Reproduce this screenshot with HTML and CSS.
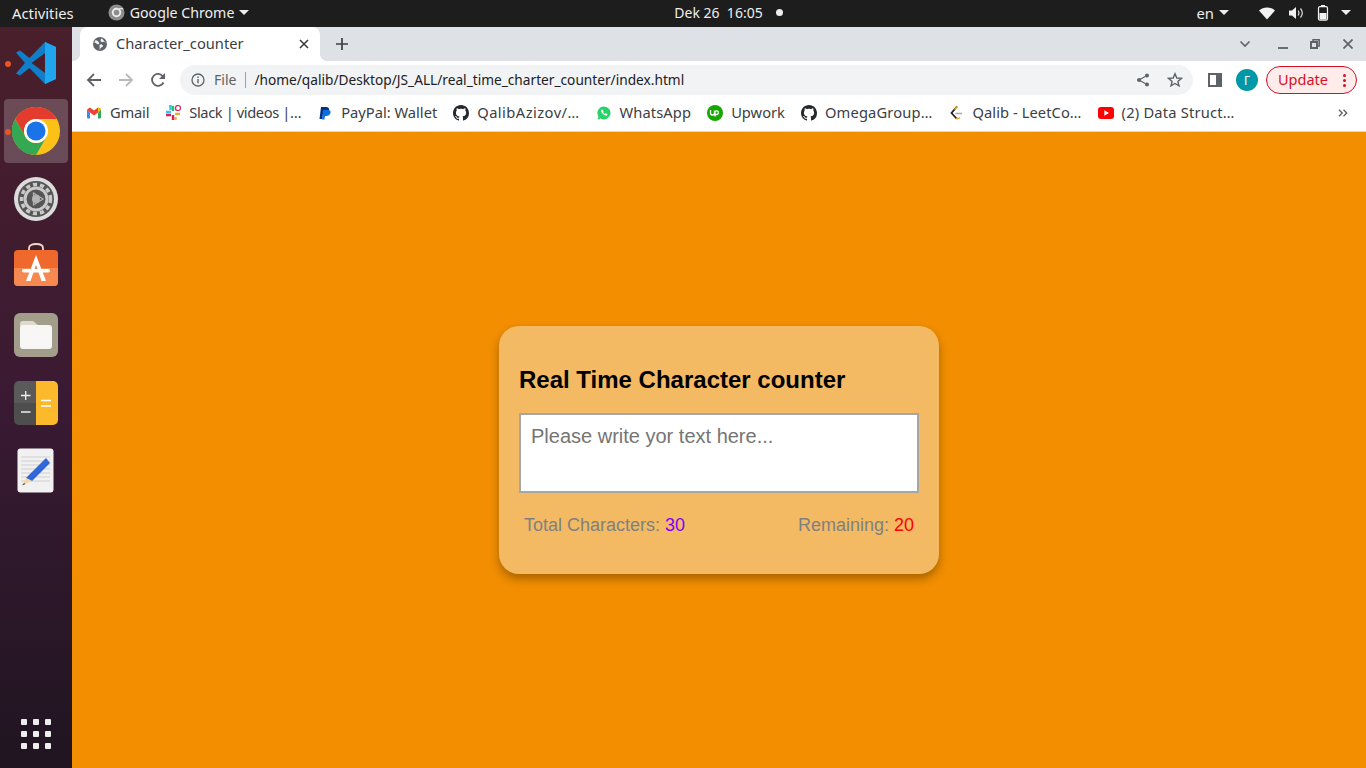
FILE: index.html
```html
<!DOCTYPE html>
<html lang="en">
<head>
    <meta charset="UTF-8">
    <meta name="viewport" content="width=device-width, initial-scale=1.0">
    <title>Character_counter</title>
    <link rel="stylesheet" href="styles.css">
</head>
<body>
    <header class="topbar">
        <div class="topbar-left">
            <span class="activities">Activities</span>
            <span class="app-menu">
                <svg class="app-icon" width="17" height="17" viewBox="0 0 18 18"><circle cx="9" cy="9" r="8.500" fill="#8d8d8d"/><circle cx="9" cy="9" r="4" fill="none" stroke="#eee" stroke-width="2"/><path d="M9 5h7" stroke="#ddd" stroke-width="1.500"/></svg>
                Google Chrome
                <i class="caret"></i>
            </span>
        </div>
        <div class="clock">Dek 26&nbsp;&nbsp;16:05<b class="clock-dot"></b></div>
        <div class="topbar-right">
            <span class="lang">en <i class="caret"></i></span>
            <svg width="18" height="14" viewBox="0 0 18 14"><path d="M1 4.500C5.500.5 12.500.5 17 4.500L9 13.500z" fill="#f2f2f2"/></svg>
            <svg class="sound" width="16" height="14" viewBox="0 0 16 14"><path d="M1 4.500h3L8 1v12L4 9.500H1z" fill="#f2f2f2"/><path d="M10 4.500c1.200 1.500 1.200 3.500 0 5M12.500 2.500c2.200 2.700 2.200 6.300 0 9" fill="none" stroke="#ddd" stroke-width="1.200"/></svg>
            <svg width="12" height="16" viewBox="0 0 12 16"><rect x="1.500" y="1.700" width="9" height="13.500" rx="1.500" fill="none" stroke="#f2f2f2" stroke-width="1.200"/><rect x="4" y="0" width="4" height="2" fill="#f2f2f2"/><rect x="2.500" y="8" width="7" height="6.500" fill="#f2f2f2"/></svg>
            <i class="caret"></i>
        </div>
    </header>

    <div class="desktop">
        <nav class="dock">
            <div class="dock-item">
                <b class="running"></b>
                <svg width="44" height="44" viewBox="0 0 44 44">
                    <path d="M31 1 15.500 17 6 9.500 2 11.500 11 22 2 32.500 6 34.500 15.500 27 31 43 42 38V6z" fill="#0f7fc9"/>
                    <path d="M31 1 42 6V38L31 43z" fill="#20a5ef"/>
                    <path d="M31 12V32L17.500 22z" fill="#4a1f2b"/>
                </svg>
            </div>
            <div class="dock-item active">
                <b class="running"></b>
                <svg width="48" height="48" viewBox="0 0 48 48">
                    <circle cx="24" cy="24" r="24" fill="#fbc116"/>
                    <path d="M3.200 12A24 24 0 0 1 44.800 12H24A12 12 0 0 0 13.600 30z" fill="#e33b2e"/>
                    <path d="M3.200 12A24 24 0 0 0 24 48L34.400 30A12 12 0 0 1 13.600 30z" fill="#34a853"/>
                    <circle cx="24" cy="24" r="12" fill="#fff"/>
                    <circle cx="24" cy="24" r="9.500" fill="#1a73e8"/>
                </svg>
            </div>
            <div class="dock-item">
                <svg width="46" height="46" viewBox="0 0 46 46">
                    <circle cx="23" cy="23" r="22" fill="#dcdcdc"/>
                    <circle cx="23" cy="23" r="18" fill="#565656"/>
                    <circle cx="23" cy="23" r="14.500" fill="none" stroke="#c9c9c9" stroke-width="3.500" stroke-dasharray="4.200 3"/>
                    <circle cx="23" cy="23" r="11" fill="none" stroke="#c9c9c9" stroke-width="3"/>
                    <circle cx="23" cy="23" r="4" fill="#b5b5b5"/>
                    <path d="M20.500 17 30 23 20.500 29z" fill="none" stroke="#b5b5b5" stroke-width="1.200"/>
                </svg>
            </div>
            <div class="dock-item">
                <svg width="44" height="48" viewBox="0 0 44 48">
                    <path d="M15 8V5C15 2.500 18 1 22 1s7 1.500 7 4v3" fill="none" stroke="#eed9c4" stroke-width="1.800"/>
                    <rect x="0" y="7" width="44" height="36" rx="4" fill="#f0692c"/>
                    <path d="M0 25H44V39a4 4 0 0 1-4 4H4a4 4 0 0 1-4-4z" fill="#f5894f"/>
                    <path d="M22 12 32 38H27.500L22 22 16.500 38H12z" fill="#fff"/>
                    <rect x="8" y="26" width="28" height="3.500" rx="1.700" fill="#fff"/>
                </svg>
            </div>
            <div class="dock-item">
                <svg width="44" height="44" viewBox="0 0 44 44">
                    <rect width="44" height="44" rx="6" fill="#a39e8c"/>
                    <path d="M6 11a3 3 0 0 1 3-3h10l6 5H6z" fill="#dedad0"/>
                    <rect x="6" y="12" width="32" height="24" rx="3" fill="#f8f7f5"/>
                </svg>
            </div>
            <div class="dock-item">
                <svg width="44" height="44" viewBox="0 0 44 44">
                    <path d="M22 0H5a5 5 0 0 0-5 5v17h22z" fill="#5a5a5a"/>
                    <path d="M22 22H0v17a5 5 0 0 0 5 5h17z" fill="#4e4e4e"/>
                    <path d="M22 0h17a5 5 0 0 1 5 5v34a5 5 0 0 1-5 5H22z" fill="#fdb92c"/>
                    <path d="M7 14.500h9.500M11.700 10v9M7 31h9.500" stroke="#eee" stroke-width="1.300"/>
                    <path d="M27 19.500h10M27 25h10" stroke="#fff" stroke-width="1.300"/>
                </svg>
            </div>
            <div class="dock-item">
                <svg width="38" height="46" viewBox="0 0 38 46">
                    <rect x="0.500" y="0.500" width="36" height="44" rx="3" fill="#f1f1f1"/>
                    <path d="M4 9h29M4 13h29M4 17h29M4 21h29M4 25h29M4 29h29M4 33h29" stroke="#cfcfcf" stroke-width="1"/>
                    <path d="M29 10 33 15 15 33 9 30z" fill="#2f66d8"/>
                    <path d="M9 30 15 33 5.500 37z" fill="#f0d6a8"/>
                    <path d="M7 35 5 37.500 8.500 36z" fill="#444"/>
                </svg>
            </div>
            <div class="apps-grid">
                <i></i><i></i><i></i><i></i><i></i><i></i><i></i><i></i><i></i>
            </div>
        </nav>

        <div class="browser">
            <div class="tabstrip">
                <div class="tab">
                    <svg width="14" height="14" viewBox="0 0 16 16"><circle cx="8" cy="8" r="8" fill="#5f6368"/><path d="M3 3.500c2 .5 3 1.500 4 3S5 9 4.500 8 2 6 1 7M10 1.500C9 3 8 3.500 9 5s3 0 4 .5 1 1.500 2 1.500M8 15c0-2 1-2.500 2.500-3.500s1-2.500-.5-3-3 .5-2.500 2.500S7 13.500 8 15z" fill="#fff" opacity=".9"/></svg>
                    <span class="tab-title">Character_counter</span>
                    <svg class="tab-close" width="10" height="10" viewBox="0 0 10 10"><path d="M1 1l8 8M9 1l-8 8" stroke="#3c4043" stroke-width="1.600"/></svg>
                </div>
                <svg class="new-tab" width="12" height="12" viewBox="0 0 12 12"><path d="M6 0v12M0 6h12" stroke="#3c4043" stroke-width="1.700"/></svg>
                <div class="window-controls">
                    <svg width="12" height="8" viewBox="0 0 12 8"><path d="M1.500 1.500 6 6l4.500-4.500" fill="none" stroke="#5f6368" stroke-width="1.600"/></svg>
                    <svg class="win-min" width="10" height="10" viewBox="0 0 10 10"><path d="M0 9h10" stroke="#5f6368" stroke-width="1.800"/></svg>
                    <svg class="win-max" width="10" height="10" viewBox="0 0 10 10"><path d="M3 2V.800h6.200V7H8" fill="none" stroke="#5f6368" stroke-width="1.500"/><rect x="1" y="3" width="6" height="6" fill="none" stroke="#5f6368" stroke-width="2"/></svg>
                    <svg class="win-close" width="10" height="10" viewBox="0 0 10 10"><path d="M.500.500l9 9M9.500.500l-9 9" stroke="#5f6368" stroke-width="1.700"/></svg>
                </div>
            </div>

            <div class="toolbar">
                <svg class="nav-btn" width="16" height="16" viewBox="0 0 16 16"><path d="M15 8H2M8 2 2 8l6 6" fill="none" stroke="#5f6368" stroke-width="1.800"/></svg>
                <svg class="nav-btn" width="16" height="16" viewBox="0 0 16 16"><path d="M1 8h13M8 2l6 6-6 6" fill="none" stroke="#b8babd" stroke-width="1.800"/></svg>
                <svg class="nav-btn" width="16" height="16" viewBox="0 0 16 16"><path d="M13.500 10.500A6 6 0 1 1 13 4.500" fill="none" stroke="#5f6368" stroke-width="1.800"/><path d="M15 1v6H9z" fill="#5f6368"/></svg>
                <div class="omnibox">
                    <svg width="14" height="14" viewBox="0 0 14 14"><circle cx="7" cy="7" r="6" fill="none" stroke="#5f6368" stroke-width="1.300"/><path d="M7 6v4.200M7 3.500v1.400" stroke="#5f6368" stroke-width="1.400"/></svg>
                    <span class="scheme">File</span>
                    <span class="omni-sep"></span>
                    <span class="url">/home/qalib/Desktop/JS_ALL/real_time_charter_counter/index.html</span>
                    <svg class="share" width="14" height="14" viewBox="0 0 14 14"><path d="M11 2.500 3 7l8 4.500" fill="none" stroke="#5f6368" stroke-width="1.200"/><circle cx="11" cy="2.500" r="2" fill="#5f6368"/><circle cx="3" cy="7" r="2" fill="#5f6368"/><circle cx="11" cy="11.500" r="2" fill="#5f6368"/></svg>
                    <svg class="star" width="16" height="16" viewBox="0 0 16 16"><path d="M8 1.800 9.800 6l4.600.4-3.500 3 1.100 4.500L8 11.500l-4 2.400 1.100-4.500-3.500-3L6.200 6z" fill="none" stroke="#5f6368" stroke-width="1.400"/></svg>
                </div>
                <svg class="side-panel" width="14" height="14" viewBox="0 0 14 14"><rect x="1" y="1" width="12" height="12" fill="none" stroke="#5f6368" stroke-width="2"/><rect x="8" y="1" width="5" height="12" fill="#5f6368"/></svg>
                <div class="avatar">Γ</div>
                <div class="update">Update<span class="update-dots"><i></i><i></i><i></i></span></div>
            </div>

            <div class="bookmarks">
                <span class="bookmark bm-gmail">
                    <svg width="16" height="16" viewBox="-1 -2.500 16 16"><path d="M0 2v8a1 1 0 0 0 1 1h2V5z" fill="#4285f4"/><path d="M14 2v8a1 1 0 0 1-1 1h-2V5z" fill="#34a853"/><path d="M0 2 3 0l4 3 4-3 3 2-3 3-4 3-4-3z" fill="#ea4335"/><path d="M11 0l3 1v1l-3 3z" fill="#fbbc04"/></svg>
                    Gmail
                </span>
                <span class="bookmark bm-slack">
                    <svg width="16" height="16" viewBox="0 0 16 16"><path d="M1 7h5M4 1h1.500v4" stroke="#36c5f0" stroke-width="2.400" fill="none"/><path d="M8 1v5M10 4h4" stroke="#2eb67d" stroke-width="2.400" fill="none"/><path d="M10 9h5M10.500 12v3" stroke="#ecb22e" stroke-width="2.400" fill="none"/><path d="M8 10v5M1 10h5" stroke="#e01e5a" stroke-width="2.400" fill="none"/><circle cx="13" cy="3" r="2.500" fill="#fff" stroke="#e01e5a" stroke-width="1.200"/></svg>
                    Slack | videos |…
                </span>
                <span class="bookmark bm-paypal">
                    <svg width="16" height="16" viewBox="-1 -1 16 16"><path d="M3 1h5c2.500 0 3.500 1.500 3 3.500S8.500 8 6.500 8H5l-1 5H1.500z" fill="#003087"/><path d="M5 4h5c2 0 3 1.200 2.500 3S10 10 8.500 10H7l-.7 3.500H4z" fill="#0a6fd8"/></svg>
                    PayPal: Wallet
                </span>
                <span class="bookmark bm-qalib">
                    <svg width="16" height="16" viewBox="0 0 16 16"><path d="M8 0C3.580 0 0 3.580 0 8c0 3.540 2.290 6.530 5.470 7.590.4.070.55-.17.55-.38 0-.19-.01-.82-.01-1.490-2.010.37-2.530-.49-2.690-.94-.09-.23-.48-.94-.82-1.130-.28-.15-.68-.52-.01-.53.63-.01 1.080.58 1.230.82.720 1.210 1.870.87 2.330.66.070-.52.280-.87.510-1.070-1.780-.2-3.640-.89-3.640-3.950 0-.87.310-1.590.820-2.150-.08-.2-.36-1.020.08-2.120 0 0 .67-.21 2.200.82.640-.18 1.320-.27 2-.27s1.360.09 2 .27c1.530-1.040 2.200-.82 2.200-.82.440 1.100.16 1.920.08 2.120.51.560.82 1.270.82 2.150 0 3.070-1.870 3.750-3.650 3.950.29.250.54.730.54 1.480 0 1.070-.01 1.930-.01 2.200 0 .21.150.46.550.38A8.010 8.010 0 0 0 16 8c0-4.420-3.580-8-8-8z" fill="#24292e"/></svg>
                    QalibAzizov/…
                </span>
                <span class="bookmark bm-whatsapp">
                    <svg width="16" height="16" viewBox="-1 -1 16 16"><path d="M7 .500a6.500 6.500 0 0 0-5.500 10L.500 13.500l3-1A6.500 6.500 0 1 0 7 .500z" fill="#25d366"/><path d="M4.500 3.800c-1 1 0 3 1.500 4.300s3.200 2 4 1.200l.5-1-1.700-1-.8.700c-.7-.2-1.700-1.200-2-2l.6-.8-.9-1.700z" fill="#fff"/></svg>
                    WhatsApp
                </span>
                <span class="bookmark">
                    <svg width="16" height="16" viewBox="0 0 16 16"><circle cx="8" cy="8" r="8" fill="#14a800"/><path d="M3.500 5v3a2 2 0 0 0 4 0V5.500M8 11.500V7a1.800 1.800 0 1 1 1.800 2.500H8" fill="none" stroke="#fff" stroke-width="1.300"/></svg>
                    Upwork
                </span>
                <span class="bookmark bm-omega">
                    <svg width="16" height="16" viewBox="0 0 16 16"><path d="M8 0C3.580 0 0 3.580 0 8c0 3.540 2.290 6.530 5.470 7.590.4.070.55-.17.55-.38 0-.19-.01-.82-.01-1.490-2.010.37-2.530-.49-2.690-.94-.09-.23-.48-.94-.82-1.130-.28-.15-.68-.52-.01-.53.63-.01 1.080.58 1.230.82.720 1.210 1.870.87 2.330.66.070-.52.280-.87.510-1.070-1.780-.2-3.640-.89-3.640-3.950 0-.87.310-1.590.820-2.150-.08-.2-.36-1.020.08-2.120 0 0 .67-.21 2.200.82.640-.18 1.320-.27 2-.27s1.360.09 2 .27c1.530-1.040 2.200-.82 2.200-.82.440 1.100.16 1.920.08 2.120.51.560.82 1.270.82 2.150 0 3.070-1.870 3.750-3.650 3.950.29.250.54.730.54 1.480 0 1.070-.01 1.930-.01 2.200 0 .21.150.46.550.38A8.010 8.010 0 0 0 16 8c0-4.420-3.580-8-8-8z" fill="#24292e"/></svg>
                    OmegaGroup…
                </span>
                <span class="bookmark bm-leet">
                    <svg width="16" height="16" viewBox="0 0 16 16"><path d="M9 1.500 3.500 8l5 5.500" fill="none" stroke="#222" stroke-width="1.800"/><path d="M7.500 8.500h6.500" stroke="#aaa" stroke-width="1.600"/><path d="M6.500 4.500 9.500 1.500M8.500 13.500c1.500.5 2.500 0 3.500-1" fill="none" stroke="#f5a623" stroke-width="1.600"/></svg>
                    Qalib - LeetCo…
                </span>
                <span class="bookmark bm-data">
                    <svg width="16" height="12" viewBox="0 0 16 12"><rect width="16" height="12" rx="3" fill="#f00"/><path d="M6.300 3.300v5.400L11 6z" fill="#fff"/></svg>
                    (2) Data Struct…
                </span>
                <svg class="more-bookmarks" width="10" height="8" viewBox="0 0 10 8"><path d="M1 .800l3.200 3.200L1 7.200M5.500 .800 8.700 4 5.500 7.200" fill="none" stroke="#5f6368" stroke-width="1.400"/></svg>
            </div>

            <main class="page">
                <section class="counter-card">
                    <h2 class="counter-title">Real Time Character counter</h2>
                    <textarea class="counter-input" placeholder="Please write yor text here..."></textarea>
                    <div class="counter-stats">
                        <p>Total Characters: <span class="total">30</span></p>
                        <p>Remaining: <span class="remaining">20</span></p>
                    </div>
                </section>
            </main>
        </div>
    </div>
</body>
</html>
```

FILE: styles.css
```css
* {
    box-sizing: border-box;
}

body {
    margin: 0;
    height: 768px;
    overflow: hidden;
    font-family: "Noto Sans", "Open Sans", sans-serif;
    display: flex;
    flex-direction: column;
}

svg {
    flex: none;
    display: block;
}

.topbar {
    height: 27px;
    flex: none;
    background: #1d1d1d;
    color: #eee;
    font-size: 14.800px;
    display: flex;
    align-items: center;
    justify-content: space-between;
    padding: 0 15px 2px 12px;
}

.topbar-left {
    display: flex;
    align-items: center;
    gap: 34px;
    width: 400px;
}

.app-menu {
    display: flex;
    align-items: center;
    gap: 5px;
    font-size: 14.200px;
}

.caret {
    display: inline-block;
    width: 0;
    height: 0;
    border-left: 5px solid transparent;
    border-right: 5px solid transparent;
    border-top: 5px solid #eee;
}

.clock {
    display: flex;
    align-items: center;
    font-size: 14px;
    margin-left: 94px;
}

.clock-dot {
    width: 7px;
    height: 7px;
    border-radius: 50%;
    background: #eee;
    margin-left: 13px;
}

.topbar-right {
    display: flex;
    align-items: center;
    justify-content: flex-end;
    gap: 12px;
    width: 400px;
}

.sound {
    margin-right: 1px;
}

.lang {
    display: flex;
    align-items: center;
    gap: 5px;
    margin-right: 17px;
}

.desktop {
    flex: 1;
    display: flex;
    min-height: 0;
}

.dock {
    width: 72px;
    flex: none;
    background: linear-gradient(180deg, #4a1f2b 0%, #3a1a33 50%, #201521 100%);
    display: flex;
    flex-direction: column;
    align-items: center;
    padding-top: 4px;
}

.dock-item {
    position: relative;
    width: 64px;
    height: 64px;
    margin-bottom: 4px;
    border-radius: 4px;
    display: flex;
    align-items: center;
    justify-content: center;
}

.dock-item.active {
    background: rgba(255, 255, 255, 0.2);
}

.running {
    position: absolute;
    left: 1px;
    top: 30px;
    width: 6px;
    height: 6px;
    border-radius: 50%;
    background: #e95420;
}

.apps-grid {
    margin-top: auto;
    margin-bottom: 19px;
    display: grid;
    grid-template-columns: repeat(3, 6px);
    gap: 6px;
}

.apps-grid i {
    width: 6px;
    height: 6px;
    border-radius: 1px;
    background: #eee;
}

.browser {
    flex: 1;
    min-width: 0;
    display: flex;
    flex-direction: column;
}

.tabstrip {
    height: 34px;
    flex: none;
    background: #dee1e6;
    display: flex;
    align-items: flex-end;
    padding-left: 8px;
}

.tab {
    position: relative;
    width: 240px;
    height: 34px;
    background: #fff;
    border-radius: 8px 8px 0 0;
    display: flex;
    align-items: center;
    padding: 0 11px 0 13px;
    gap: 9px;
    font-size: 14.700px;
    color: #3c4043;
}

/* the little curves where the tab meets the toolbar */
.tab::before,
.tab::after {
    content: "";
    position: absolute;
    bottom: 0;
    width: 8px;
    height: 8px;
}

.tab::before {
    left: -8px;
    background: radial-gradient(circle at 0 0, #dee1e6 8px, #fff 8.500px);
}

.tab::after {
    right: -8px;
    background: radial-gradient(circle at 100% 0, #dee1e6 8px, #fff 8.500px);
}

.tab-title {
    flex: 1;
    white-space: nowrap;
    padding-bottom: 2px;
}

.new-tab {
    margin: 0 0 11px 16px;
}

.window-controls {
    margin-left: auto;
    display: flex;
    align-items: center;
    height: 34px;
    padding-right: 13px;
}

.win-min {
    margin-left: 27px;
}

.win-max {
    margin-left: 22px;
}

.win-close {
    margin-left: 23px;
}

.toolbar {
    height: 36px;
    flex: none;
    background: #fff;
    display: flex;
    align-items: center;
    padding: 2px 9px 0 14px;
}

.nav-btn {
    margin-right: 16px;
}

.omnibox {
    flex: 1;
    height: 30px;
    margin-left: -2px;
    border-radius: 15px;
    background: #f1f3f4;
    display: flex;
    align-items: center;
    padding: 0 10px 0 11px;
    font-size: 14px;
    white-space: nowrap;
}

.scheme {
    color: #5f6368;
    margin-left: 9px;
    padding-bottom: 2px;
}

.omni-sep {
    width: 1px;
    height: 16px;
    background: #9aa0a6;
    margin: 0 8px 0 9px;
}

.url {
    color: #202124;
    flex: 1;
    font-size: 13.700px;
    padding-bottom: 2px;
}

.star {
    margin-left: 17px;
}

.side-panel {
    margin-left: 15px;
}

.avatar {
    width: 22px;
    height: 22px;
    margin-left: 14px;
    border-radius: 50%;
    background: #0097a7;
    color: #fff;
    font-size: 12px;
    display: flex;
    align-items: center;
    justify-content: center;
}

.update {
    width: 91px;
    height: 28px;
    margin-left: 8px;
    border: 1px solid #d50f25;
    border-radius: 14px;
    background: #fdecea;
    color: #d50f25;
    font-size: 14.500px;
    display: flex;
    align-items: center;
    padding: 0 0 2px 11px;
}

.update-dots {
    margin: 2px 0 0 15px;
    display: flex;
    flex-direction: column;
    gap: 2px;
}

.update-dots i {
    width: 3px;
    height: 3px;
    border-radius: 50%;
    background: #d50f25;
}

.bookmarks {
    height: 35px;
    flex: none;
    background: #fff;
    border-bottom: 1px solid #d4d6da;
    display: flex;
    align-items: center;
    padding: 0 0 4px 14px;
    gap: 16px;
    font-size: 14.700px;
    color: #3c4043;
}

.bookmark {
    display: flex;
    align-items: center;
    gap: 8px;
    white-space: nowrap;
}

.bookmark svg {
    margin-top: 2px;
}

.bm-gmail {
    letter-spacing: -0.2px;
}

.bm-slack {
    letter-spacing: -0.4px;
}

.bm-paypal {
    gap: 8px;
}

.bm-qalib {
    letter-spacing: 0.45px;
}

.bm-whatsapp {
    letter-spacing: 0.1px;
}

.bm-omega {
    letter-spacing: 0.15px;
}

.bm-leet {
    letter-spacing: 0.07px;
}

.bm-data {
    letter-spacing: 0.2px;
}

.more-bookmarks {
    margin: 2px 18px 0 auto;
}

.page {
    flex: 1;
    background: #f28e00;
    display: flex;
    align-items: center;
    justify-content: center;
    font-family: "Liberation Sans", Arial, sans-serif;
}

.counter-card {
    width: 440px;
    height: 248px;
    background: #f3ba63;
    border-radius: 20px;
    padding: 40px 20px 20px;
    box-shadow: 0 5px 10px rgba(0, 0, 0, 0.3);
}

.counter-title {
    margin: 0 0 19px;
    font-size: 24px;
    line-height: 28px;
    color: #000;
}

.counter-input {
    display: block;
    width: 400px;
    height: 80px;
    border: 2px solid #a6a6a6;
    padding: 10px;
    font-family: inherit;
    font-size: 20px;
    resize: none;
    outline: none;
    background: #fff;
}

.counter-input::placeholder {
    color: #757575;
}

.counter-stats {
    display: flex;
    justify-content: space-between;
    padding: 0 5px;
    margin-top: 22px;
    font-size: 18px;
    color: #808080;
}

.counter-stats p {
    margin: 0;
}

.total {
    color: #8000ff;
}

.remaining {
    color: #ff0000;
}
```
